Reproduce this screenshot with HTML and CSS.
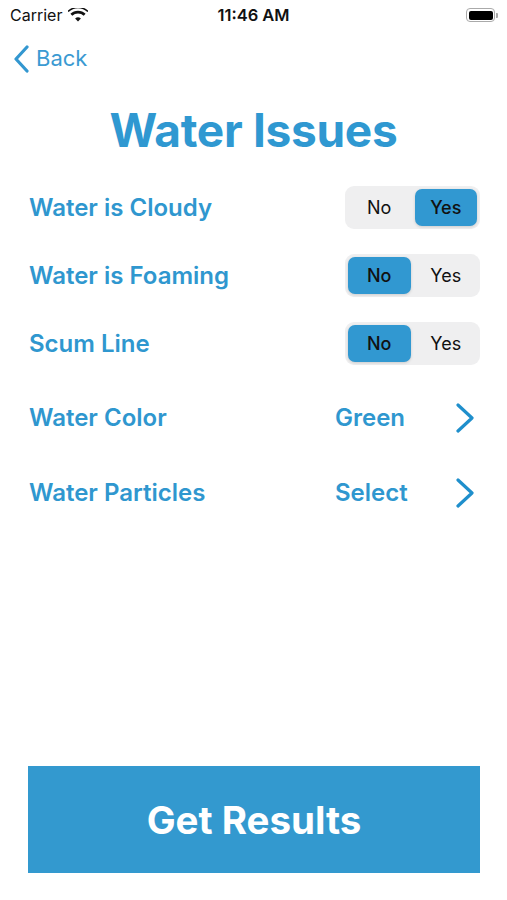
FILE: index.html
```html
<!DOCTYPE html>
<html>
<head>
<meta charset="utf-8">
<link rel="stylesheet" href="styles.css">
</head>
<body>
<div class="screen">
  <div class="status">
    <div class="status-left">Carrier
      <svg class="wifi" width="20" height="14" viewBox="0 0 20 14"><path d="M10 13.6l2.9-3a4.2 4.2 0 0 0-5.8 0z" fill="#111"/><path d="M4.3 7.8a8.1 8.1 0 0 1 11.4 0l1.9-2a10.8 10.8 0 0 0-15.2 0z" fill="#111"/><path d="M0.6 4.1a13.4 13.4 0 0 1 18.8 0l1-1.1-0.7-0.7a15 15 0 0 0-19.4 0l-0.7 0.7z" fill="#111"/></svg>
    </div>
    <div class="status-time">11:46 AM</div>
    <div class="status-right">
      <div class="battery"><div class="battery-fill"></div></div><div class="battery-cap"></div>
    </div>
  </div>
  <div class="nav">
    <svg class="back-chev" width="17" height="28" viewBox="0 0 17 28"><path d="M14 2L3 14l11 12" fill="none" stroke="#3397d0" stroke-width="3.2" stroke-linecap="round" stroke-linejoin="round"/></svg>
    <span class="back-text">Back</span>
  </div>
  <h1 class="title">Water Issues</h1>
  <div class="rows">
    <div class="row">
      <span class="label">Water is Cloudy</span>
      <div class="seg"><span class="opt">No</span><span class="opt on">Yes</span></div>
    </div>
    <div class="row">
      <span class="label">Water is Foaming</span>
      <div class="seg"><span class="opt on">No</span><span class="opt">Yes</span></div>
    </div>
    <div class="row">
      <span class="label">Scum Line</span>
      <div class="seg"><span class="opt on">No</span><span class="opt">Yes</span></div>
    </div>
    <div class="row pick first">
      <span class="label">Water Color</span>
      <span class="value">Green</span>
      <svg class="chev" width="20" height="30" viewBox="0 0 20 30"><path d="M3 2l14 13L3 28" fill="none" stroke="#1f8fcc" stroke-width="3.2" stroke-linecap="round" stroke-linejoin="round"/></svg>
    </div>
    <div class="row pick">
      <span class="label">Water Particles</span>
      <span class="value">Select</span>
      <svg class="chev" width="20" height="30" viewBox="0 0 20 30"><path d="M3 2l14 13L3 28" fill="none" stroke="#1f8fcc" stroke-width="3.2" stroke-linecap="round" stroke-linejoin="round"/></svg>
    </div>
  </div>
  <div class="spacer"></div>
  <div class="btn">Get Results</div>
</div>
</body>
</html>
```
FILE: styles.css
```css
* { box-sizing: border-box; }
html, body { margin: 0; padding: 0; background: #fff; }
body { font-family: Inter, "Liberation Sans", sans-serif; }
.screen { width: 507px; height: 900px; display: flex; flex-direction: column; }
.status { height: 30px; display: flex; align-items: center; justify-content: space-between; padding: 0 9px 0 10px; font-size: 16px; color: #111; position: relative; }
.status-left { display: flex; align-items: center; gap: 6px; }
.wifi { margin-top: -1px; }
.status-time { position: absolute; left: 0; right: 0; text-align: center; font-size: 16.5px; font-weight: 600; pointer-events: none; }
.status-right { display: flex; align-items: center; }
.battery { width: 29px; height: 14px; border: 1.5px solid #aaa; border-radius: 4px; padding: 1.5px; }
.battery-fill { width: 100%; height: 100%; background: #000; border-radius: 2px; }
.battery-cap { width: 2px; height: 5px; background: #aaa; border-radius: 0 1px 1px 0; margin-left: 1px; }
.nav { height: 56px; display: flex; align-items: center; padding-left: 13px; gap: 6px; color: #3397d0; }
.back-chev { margin-top: 2px; }
.back-text { font-size: 22px; color: #3a9ad2; }
.title { margin: 16px 0 0; text-align: center; font-size: 46px; font-weight: 700; color: #2f98d1; line-height: 56px; letter-spacing: -0.3px; }
.rows { padding: 0 27px 0 29px; margin-top: 15px; }
.row { display: flex; align-items: center; height: 68px; }
.row .label { flex: 1; font-size: 24px; font-weight: 600; color: #2f97cf; }
.seg { width: 135px; height: 43px; background: #efeff0; border-radius: 9px; display: flex; padding: 3px; gap: 4px; }
.opt { flex: 1; display: flex; align-items: center; justify-content: center; font-size: 18px; color: #111; border-radius: 7px; }
.opt.on { background: #3198d1; box-shadow: 0 1px 3px rgba(0,0,0,0.15); font-weight: 500; }
.row.pick { height: 75px; }
.row.pick.first { margin-top: 3px; }
.value { font-size: 24px; font-weight: 600; color: #2f97cf; width: 120px; }
.chev { margin-right: 5px; }
.spacer { flex: 1; }
.btn { margin: 0 27px 27px 28px; height: 107px; background: #3399cf; color: #fff; font-size: 38.5px; font-weight: 700; display: flex; align-items: center; justify-content: center; }
```
